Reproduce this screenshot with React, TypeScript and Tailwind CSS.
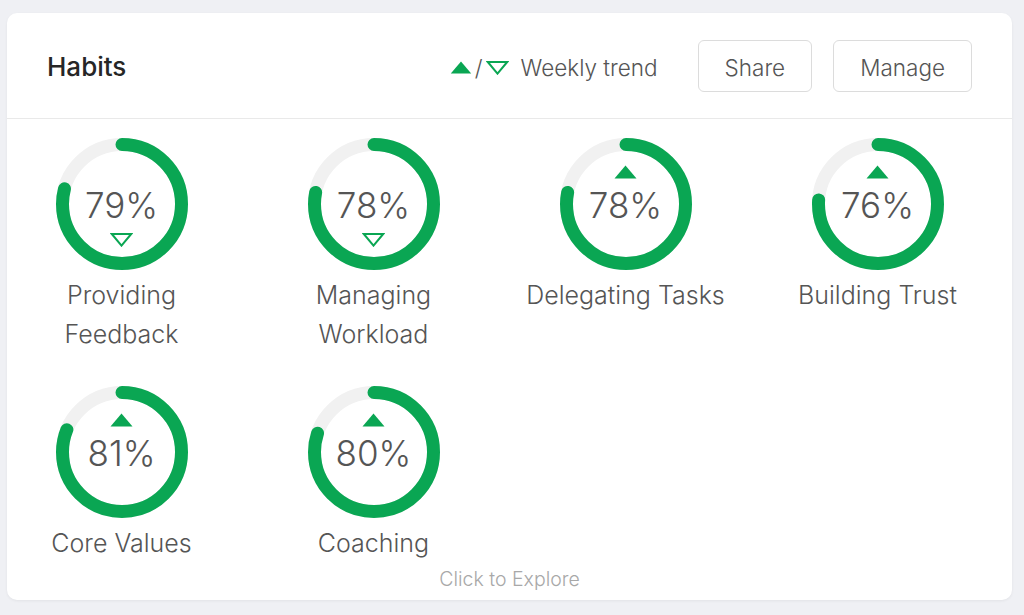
import React from "react";

type Habit = {
  name: string;
  lines: string[];
  value: number;
  trend: "up" | "down";
};

const habits: Habit[] = [
  { name: "Providing Feedback", lines: ["Providing", "Feedback"], value: 79, trend: "down" },
  { name: "Managing Workload", lines: ["Managing", "Workload"], value: 78, trend: "down" },
  { name: "Delegating Tasks", lines: ["Delegating Tasks"], value: 78, trend: "up" },
  { name: "Building Trust", lines: ["Building Trust"], value: 76, trend: "up" },
  { name: "Core Values", lines: ["Core Values"], value: 81, trend: "up" },
  { name: "Coaching", lines: ["Coaching"], value: 80, trend: "up" },
];

const GREEN = "#0aa653";

function TriangleUp({ className = "" }: { className?: string }) {
  return (
    <svg viewBox="0 0 23 14" className={className}>
      <polygon points="11.5,0.5 22.5,13.5 0.5,13.5" fill={GREEN} />
    </svg>
  );
}

function TriangleDown({ className = "" }: { className?: string }) {
  return (
    <svg viewBox="0 0 23 14" className={className}>
      <polygon
        points="1.8,1 21.2,1 11.5,12.6"
        fill="none"
        stroke={GREEN}
        strokeWidth="2"
      />
    </svg>
  );
}

function Ring({ value, trend }: { value: number; trend: "up" | "down" }) {
  const r = 59.5;
  const c = 2 * Math.PI * r;
  const len = (value / 100) * c;

  return (
    <div className="relative h-[132px] w-[132px]">
      <svg viewBox="0 0 132 132" className="h-[132px] w-[132px] -rotate-90">
        <circle cx="66" cy="66" r={r} fill="none" stroke="#f1f1f1" strokeWidth="13" />
        <circle
          cx="66"
          cy="66"
          r={r}
          fill="none"
          stroke={GREEN}
          strokeWidth="13"
          strokeLinecap="round"
          strokeDasharray={`${len} ${c}`}
        />
      </svg>
      {/* percentage + weekly trend marker */}
      <div className="absolute inset-0 flex items-center justify-center pt-[2px]">
        <span className="text-[35px] font-[350] leading-none text-[#555]">{value}%</span>
      </div>
      {trend === "up" ? (
        <TriangleUp className="absolute left-[54.5px] top-[26.5px] h-[14px] w-[23px]" />
      ) : (
        <TriangleDown className="absolute left-[54.5px] top-[94.5px] h-[14px] w-[23px]" />
      )}
    </div>
  );
}

export default function App() {
  return (
    <div
      className="min-h-[615px] w-[1024px] bg-[#eff0f4] pl-[7px] pt-[13px]"
      style={{ fontFamily: "Inter, 'Liberation Sans', sans-serif" }}
    >
      <div className="flex h-[587px] w-[1005px] flex-col rounded-[10px] bg-white shadow-[0_1px_3px_rgba(0,0,0,0.06)]">
        {/* header */}
        <div className="flex h-[106px] items-center border-b border-[#e9e9e9] px-[40px]">
          <h1 className="pt-[2px] text-[26px] font-[450] text-[#262626]">Habits</h1>
          <div className="ml-auto flex items-center pt-[1px]">
            <div className="flex items-center pt-[3px] text-[22.5px] font-[350] text-[#555]">
              <TriangleUp className="h-[13px] w-[22px]" />
              <span className="mx-[3px] text-[#555]">/</span>
              <TriangleDown className="h-[14px] w-[23px]" />
              <span className="ml-[12px]">Weekly trend</span>
            </div>
            <button className="ml-[40px] h-[52px] rounded-[6px] border-[1.5px] border-[#dcdcdc] px-[26px] pt-[4px] text-[22.5px] font-[350] text-[#555]">
              Share
            </button>
            <button className="ml-[21px] h-[52px] rounded-[6px] border-[1.5px] border-[#dcdcdc] px-[26px] pt-[4px] text-[22.5px] font-[350] text-[#555]">
              Manage
            </button>
          </div>
        </div>

        {/* rings */}
        <div className="grid grid-cols-[repeat(4,220px)] gap-x-[32px] gap-y-[33px] pl-[4.5px] pt-[19px]">
          {habits.map((h) => (
            <div key={h.name} className="flex flex-col items-center">
              <Ring value={h.value} trend={h.trend} />
              <div className="mt-[6px] text-center text-[25px] font-[350] leading-[38.5px] text-[#555]">
                {h.lines.map((line) => (
                  <div key={line}>{line}</div>
                ))}
              </div>
            </div>
          ))}
        </div>

        <div className="mt-[2px] text-center text-[19.5px] font-[350] leading-[29px] text-[#a8a8a8]">
          Click to Explore
        </div>
      </div>
    </div>
  );
}
